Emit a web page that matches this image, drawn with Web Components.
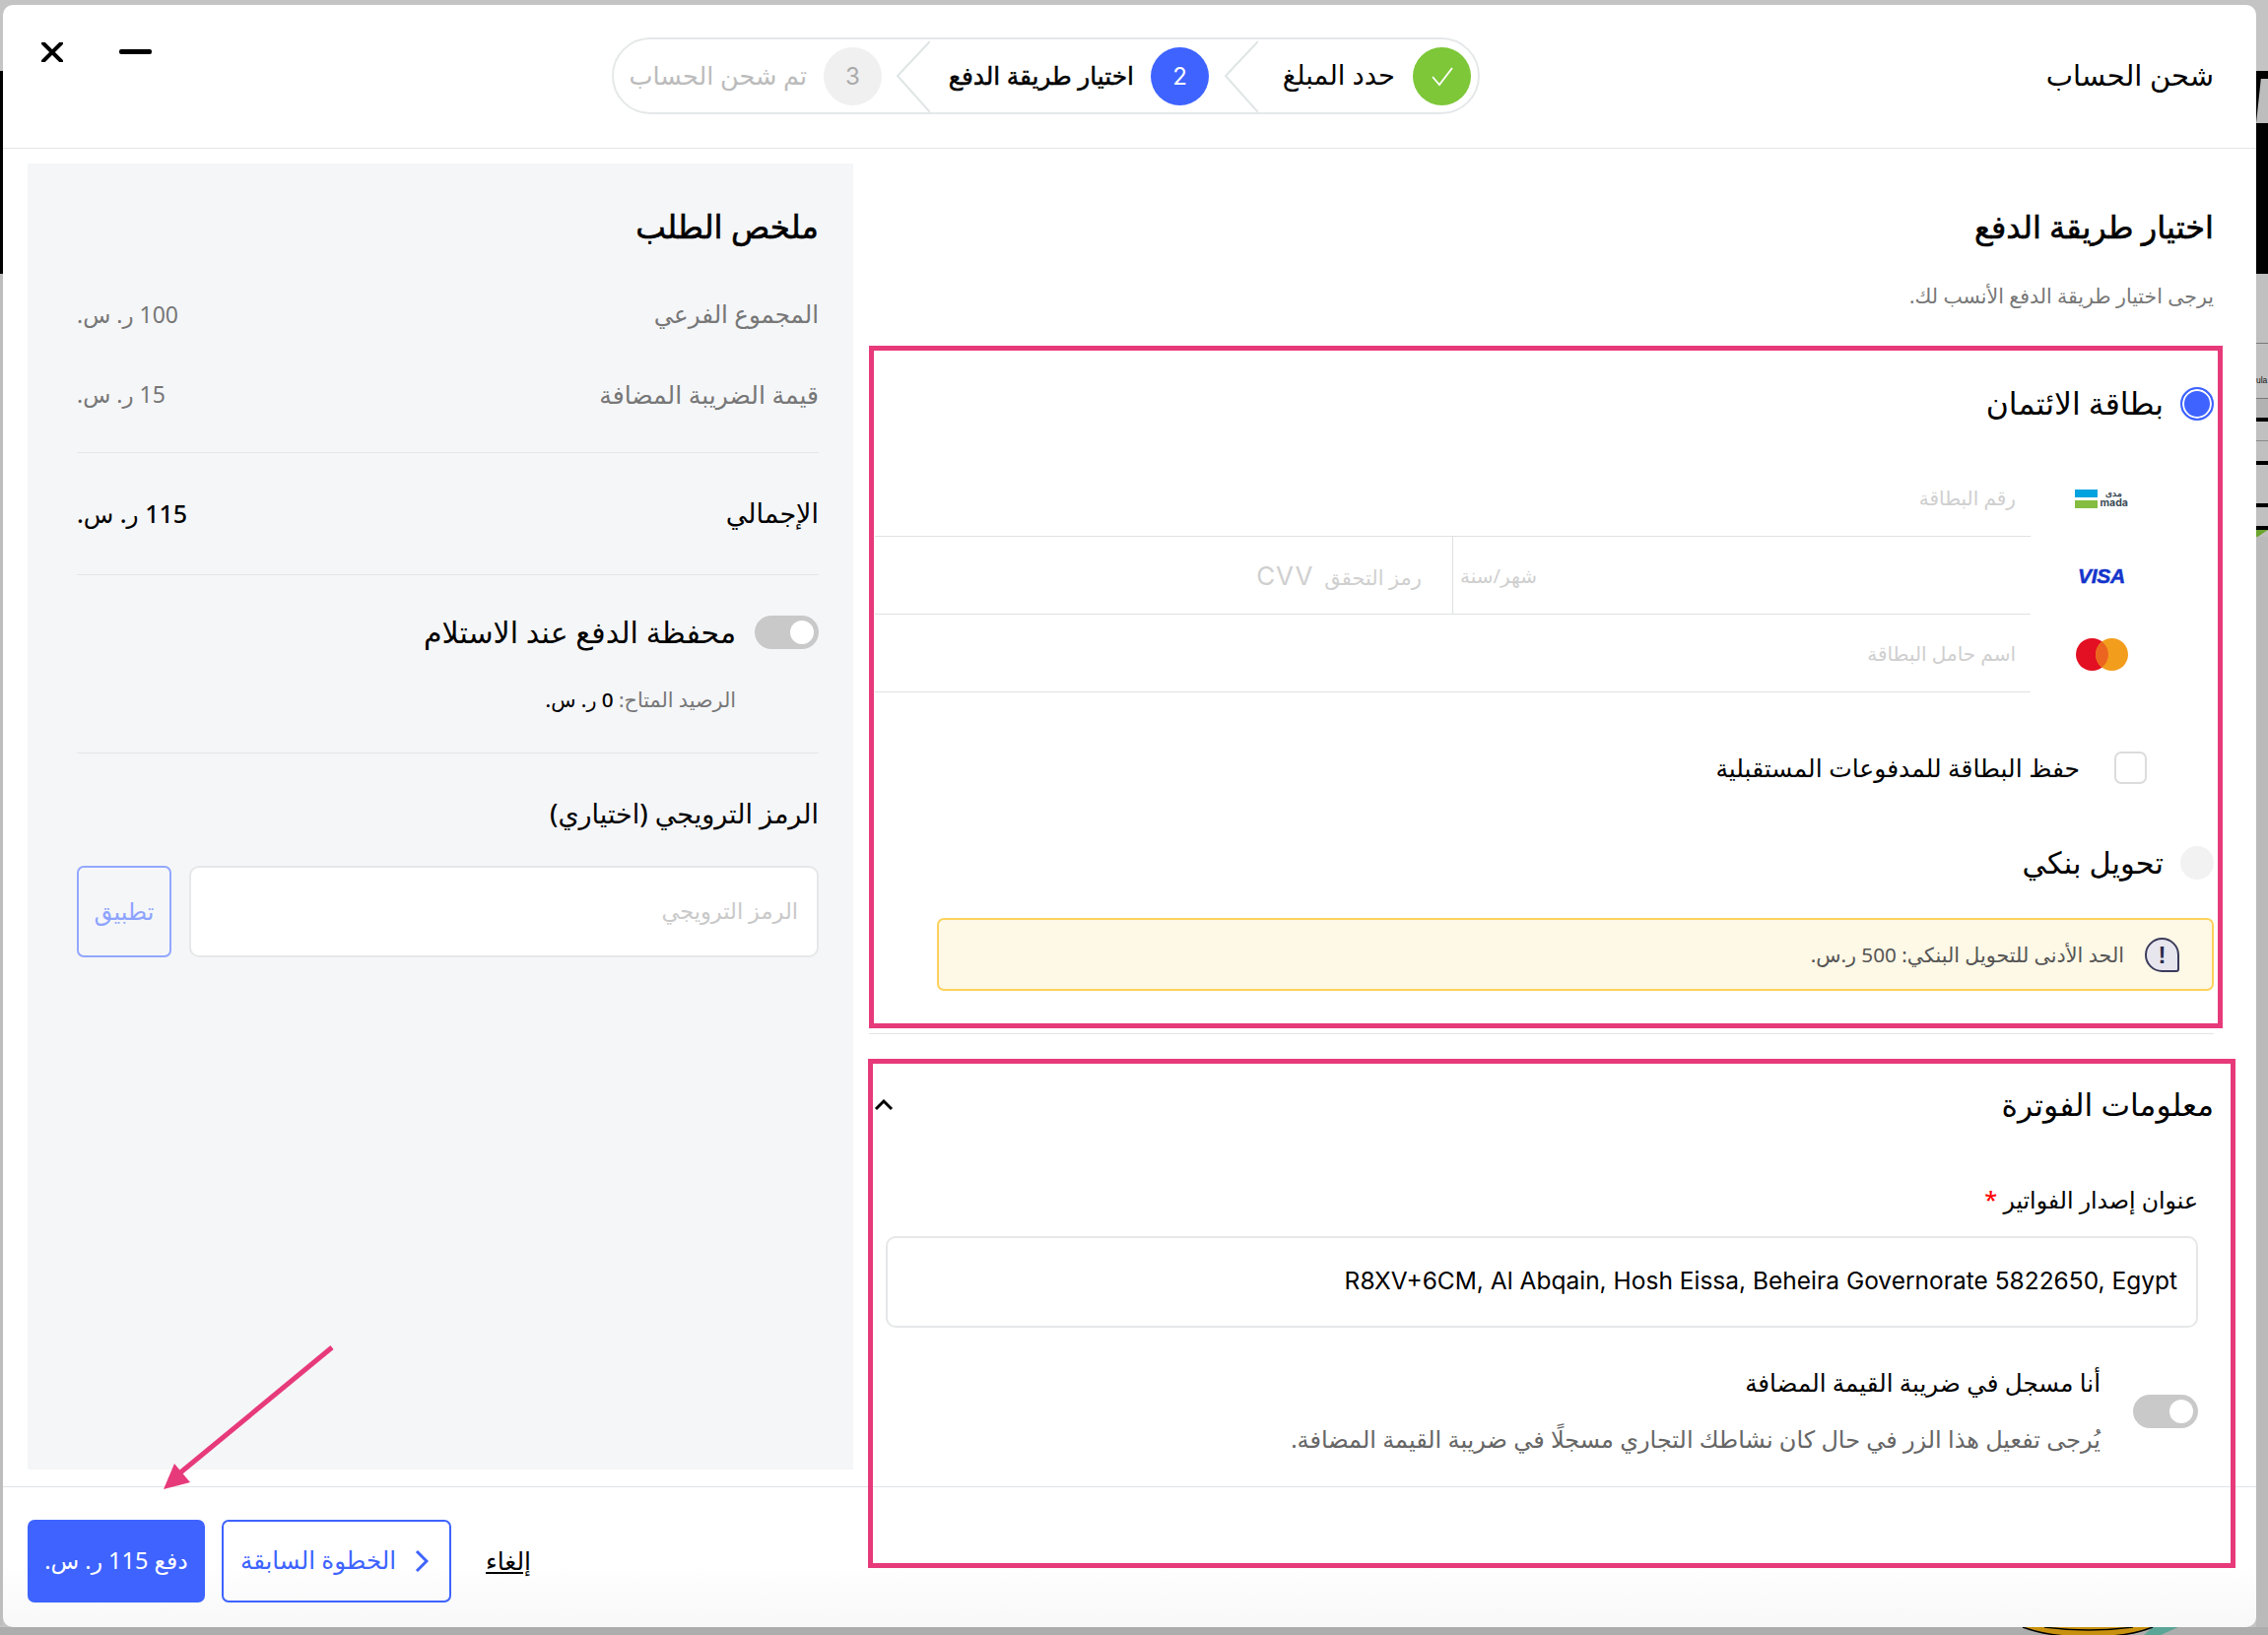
<!DOCTYPE html>
<html lang="ar"><head><meta charset="utf-8"><title>شحن الحساب</title>
<style>
html,body{margin:0;padding:0;background:#c4c4c4}
body{width:2302px;height:1660px;overflow:hidden;font-family:"Noto Sans","DejaVu Sans",sans-serif;color:#000;position:relative}
</style></head><body>
<pay-backdrop></pay-backdrop>
<pay-modal>
  <modal-header slot="header"></modal-header>
  <payment-column slot="main"></payment-column>
  <summary-column slot="side"></summary-column>
  <modal-footer slot="footer"></modal-footer>
</pay-modal>
<pay-annotations></pay-annotations>
<script>
const FONT='"Noto Sans","DejaVu Sans",sans-serif';
function def(name,html,setup){
  customElements.define(name,class extends HTMLElement{
    constructor(){super();const r=this.attachShadow({mode:'open'});
      r.innerHTML=typeof html==='function'?html(this):html;}
    connectedCallback(){if(setup)setup(this)}
  });
}
def('pay-backdrop',`<style>
:host{position:absolute;inset:0;display:block;z-index:0;overflow:hidden}
i{position:absolute;display:block}
span{position:absolute;left:2290px;top:380px;font:8.5px/12px "Liberation Sans",sans-serif;color:#111;white-space:nowrap}
svg{position:absolute;left:2040px;top:1652px}
</style>
<i style="left:0;top:72px;width:3px;height:206px;background:#000"></i>
<i style="left:0;top:278px;width:3px;height:1372px;background:#bdbdbd"></i>
<i style="left:2290px;top:72px;width:12px;height:206px;background:#000"></i>
<i style="left:2290px;top:80px;width:12px;height:45px;background:#bdbdbd;clip-path:polygon(40% 0,100% 0,100% 100%,0 100%)"></i>
<i style="left:2290px;top:278px;width:12px;height:1374px;background:#c0c0c0"></i>
<i style="left:2290px;top:348px;width:12px;height:1px;background:#777"></i>
<i style="left:2290px;top:404px;width:12px;height:20px;background:#b2b2b2;border-top:1px solid #777"></i>
<i style="left:2290px;top:424px;width:12px;height:4px;background:#000"></i>
<i style="left:2290px;top:447px;width:12px;height:1px;background:#888"></i>
<i style="left:2290px;top:468px;width:12px;height:4px;background:#000"></i>
<i style="left:2290px;top:511px;width:12px;height:4px;background:#000"></i>
<i style="left:2290px;top:534px;width:12px;height:4px;background:#000"></i>
<i style="left:2290px;top:538px;width:12px;height:8px;background:#6aa52e;clip-path:polygon(0 0,100% 0,0 100%)"></i>
<i style="left:2290px;top:545px;width:12px;height:1107px;background:#bababa"></i>
<i style="left:0;top:1652px;width:2302px;height:8px;background:#adadad"></i>
<span>ula</span>
<svg width="180" height="8" viewBox="0 0 180 8"><path d="M145 0h26l-18 8h-17z" fill="#5ba596"/><path d="M13 0 Q40 10 80 10 Q120 10 145 0Z" fill="#c8900f"/><path d="M13 0 Q40 10 80 10 Q120 10 145 0" fill="none" stroke="#000" stroke-width="1.5"/><path d="M35 0 Q80 6 125 0" fill="none" stroke="#000" stroke-width="1.5"/></svg>
`);
def('pay-modal',`<style>
:host{display:flex;flex-direction:column;position:absolute;left:3px;top:5px;width:2287px;height:1647px;background:linear-gradient(#fff 96%,#f8f8f8);border-radius:10px;overflow:hidden;z-index:1;font-family:${FONT}}
.main{display:flex;direction:rtl;height:1358px}
</style>
<slot name="header"></slot>
<div class="main"><slot name="main"></slot><slot name="side"></slot></div>
<slot name="footer"></slot>`);
def('modal-header',`<style>
:host{display:flex;align-items:flex-start;height:145px;border-bottom:1px solid #e3e5e6;padding-left:39px;box-sizing:content-box}
.x{margin-top:38px;width:22px;height:20px;display:block}
.m{margin:45px 0 0 57px;width:33px;height:5px;background:#000;border-radius:2px}
step-bar{margin:33px 0 0 467px}
h1{margin:51px 43px 0 auto;font-size:29px;line-height:40px;font-weight:400;direction:rtl}
</style>
<svg class="x" viewBox="0 0 22 20"><path d="M2 1 20 19M20 1 2 19" stroke="#000" stroke-width="4" stroke-linecap="round" fill="none"/></svg>
<div class="m"></div>
<step-bar></step-bar>
<h1>شحن الحساب</h1>`);
def('step-bar',`<style>
:host{display:flex;direction:rtl;width:881px;height:78px;box-sizing:border-box;border:2px solid #e5e8e9;border-radius:39px;align-items:center}
</style>
<step-item state="done" style="width:223px" label="حدد المبلغ"></step-item>
<step-item state="active" num="2" style="width:333px" label="اختيار طريقة الدفع"></step-item>
<step-item state="next" num="3" style="width:321px" label="تم شحن الحساب" last></step-item>`);
def('step-item',h=>{
  const s=h.getAttribute('state'),last=h.hasAttribute('last');
  const bg={done:'#7dc738',active:'#3e63ff',next:'#f0f0f0'}[s];
  const col={done:'#000',active:'#000',next:'#bbb'}[s];
  const fg=s==='next'?'#aaa':'#fff';
  const inner=s==='done'?'<svg width="26" height="26" viewBox="0 0 26 26"><path d="M3 14l7 8L23 5" fill="none" stroke="#fff" stroke-width="1.8"/></svg>':h.getAttribute('num');
  return `<style>
:host{display:flex;align-items:center;height:74px;position:relative;box-sizing:border-box;padding-right:${s==='done'?7:s==='active'?50:49}px;flex:none}
.c{width:59px;height:59px;border-radius:50%;background:${bg};color:${fg};display:flex;align-items:center;justify-content:center;font:400 24px Inter,sans-serif;flex:none}
.t{margin:-3px ${s==='done'?18:17}px 0 0;font-size:${s==='done'?27.4:s==='active'?24.8:25.5}px;font-weight:${s==='active'?500:400};color:${col};white-space:nowrap;${s==='active'?'-webkit-text-stroke:.5px #000':''}}
svg.chev{position:absolute;left:-34px;top:0;width:34px;height:74px;display:${last?'none':'block'}}
</style>
<div class="c">${inner}</div><div class="t">${h.getAttribute('label')}</div>
<svg class="chev" viewBox="0 0 34 74"><path d="M34 2 1 37 34 74" fill="none" stroke="#e0e5e6" stroke-width="2"/></svg>`});
def('toggle-switch',`<style>
:host{display:block;width:var(--w,66px);height:34px;background:#c9c9c9;border-radius:17px;position:relative;flex:none}
i{position:absolute;right:5px;top:5px;width:24px;height:24px;border-radius:50%;background:#fff}
</style><i></i>`);
def('pay-radio',h=>{const on=h.hasAttribute('on');return `<style>
:host{display:flex;align-items:center;direction:rtl;height:34px}
.r{width:34px;height:34px;border-radius:50%;box-sizing:border-box;flex:none;${on?'border:2px solid #3e63ff;background:#3e63ff;box-shadow:inset 0 0 0 2px #fff':'background:#f2f2f2'}}
.l{margin:-2px 17px 0 0;font-size:${on?31.5:30.5}px;line-height:34px;font-weight:${on?400:500};white-space:nowrap}
</style><div class="r"></div><div class="l">${h.getAttribute('label')}</div>`});
def('card-form',`<style>
:host{display:flex;direction:rtl;margin-top:39px}
.logos{width:144px;margin-right:42px;flex:none;display:flex;flex-direction:column}
.logo{height:79px;display:flex;align-items:center;justify-content:center}
.mada{display:flex;direction:ltr;width:55px;gap:3px;margin-top:2px}
.bars{width:23px;display:flex;flex-direction:column;gap:3px;flex:none}
.bars b{display:block;height:8px}
.names{display:flex;flex-direction:column;height:19px;justify-content:space-between;color:#3c4a55;font-weight:700}
.ar{font:700 8.5px/8px "Noto Sans",sans-serif;text-align:center;height:8px}
.lat{font:700 10.5px/10px Inter,sans-serif;height:10px}
.visa{font:italic 900 21px/20px "Liberation Sans",sans-serif;color:#1434cb;letter-spacing:-.3px;-webkit-text-stroke:.5px #1434cb}
.mc{margin-top:2px;display:block}
.f{flex:1;margin-left:6px}
.row{height:78px;border-bottom:1px solid #dfe1e2;display:flex;align-items:center;font-size:20px;color:#cfcfcf;padding-right:15px}
.mm{width:85px;white-space:nowrap}
.v{padding-right:31px;white-space:nowrap;font-size:21px}
.v em{font:normal 26px Inter,sans-serif;letter-spacing:1px}
</style>
<div class="logos">
 <div class="logo"><div class="mada"><div class="bars"><b style="background:#00a3df"></b><b style="background:#84bd3f"></b></div><div class="names"><span class="ar">مدى</span><span class="lat">mada</span></div></div></div>
 <div class="logo"><span class="visa">VISA</span></div>
 <div class="logo"><svg class="mc" width="53" height="33" viewBox="0 0 53 33"><circle cx="16.5" cy="16.5" r="16.5" fill="#e30f22"/><circle cx="36.5" cy="16.5" r="16.5" fill="#f29d1c"/><path d="M26.5 3.4a16.5 16.5 0 0 1 0 26.2a16.5 16.5 0 0 1 0-26.2Z" fill="#ec6520"/></svg></div>
</div>
<div class="f">
 <div class="row">رقم البطاقة</div>
 <div class="row" style="padding-right:501px"><span class="mm">شهر/سنة</span><span style="width:1px;height:78px;background:#dfe1e2;flex:none"></span><span class="v">رمز التحقق&nbsp; <em>CVV</em></span></div>
 <div class="row">اسم حامل البطاقة</div>
</div>`);
def('pay-check',`<style>
:host{display:flex;direction:rtl;align-items:center;margin-top:60px;height:33px;padding-right:68px}
.b{width:33px;height:33px;box-sizing:border-box;border:2px solid #dcdcdc;border-radius:7px;flex:none}
.t{margin-right:35px;font-size:25px;line-height:33px;font-weight:500;white-space:nowrap}
</style><div class="b"></div><div class="t"><slot></slot></div>`);
def('alert-note',`<style>
:host{display:flex;direction:rtl;align-items:center;height:74px;box-sizing:border-box;margin:39px 0 0 69px;border:2px solid #fdd25c;border-radius:7px;background:#fef8e6;padding-right:33px}
.i{width:35px;height:35px;box-sizing:border-box;border:2px solid #3b3b5c;border-radius:50% 50% 3px 50%;background:#e7e6ef;color:#2c2c4c;font:700 24px/31px "Liberation Sans",sans-serif;text-align:center;flex:none}
.t{margin-right:21px;font-size:20.7px;color:#555;white-space:nowrap}
</style><div class="i">!</div><div class="t"><slot></slot></div>`);
def('text-input',h=>`<style>
:host{display:flex;align-items:center;height:93px;box-sizing:border-box;background:#fff;border:2px solid #e5e7e8;border-radius:10px;direction:rtl;padding:0 19px 3px 0;font-size:var(--fs,22.5px);color:var(--c,#c9c9c9);white-space:nowrap}
</style><slot></slot>`);
def('billing-info',`<style>
:host{display:block;direction:rtl}
.h{display:flex;justify-content:space-between;align-items:center;height:40px;margin-top:51px}
h2{margin:0;font-size:31.4px;font-weight:500;line-height:40px}
svg{display:block}
.lab{margin:62px 16px 0 0;height:30px;font-size:23.6px;line-height:30px;font-weight:500}
.lab span{color:#f00}
text-input{margin:22px 16px 0 17px;--c:#000;--fs:24.5px}
.vat{display:flex;align-items:center;margin:41px 16px 0 0}
.txt{margin-right:33px}
.a{font-size:24.6px;line-height:30px;height:30px;font-weight:500;white-space:nowrap}
.b{margin-top:27px;font-size:24px;line-height:30px;height:30px;color:#666;white-space:nowrap}
</style>
<div class="h"><h2>معلومات الفوترة</h2><svg width="22" height="14" viewBox="0 0 22 14" style="margin:2px 4px 0 0;margin-left:4px"><path d="M3 11 11 3l8 8" fill="none" stroke="#000" stroke-width="3"/></svg></div>
<div class="lab">عنوان إصدار الفواتير <span>*</span></div>
<text-input><span dir="ltr" style="font-family:Inter,'Noto Sans',sans-serif">R8XV+6CM, Al Abqain, Hosh Eissa, Beheira Governorate 5822650, Egypt</span></text-input>
<div class="vat"><toggle-switch></toggle-switch><div class="txt"><div class="a">أنا مسجل في ضريبة القيمة المضافة</div><div class="b">يُرجى تفعيل هذا الزر في حال كان نشاطك التجاري مسجلًا في ضريبة القيمة المضافة.</div></div></div>`);
def('payment-column',`<style>
:host{display:block;box-sizing:border-box;width:1408px;padding:0 43px 0 0;flex:none;direction:rtl}
h2{margin:59px 0 0;font-size:32px;line-height:40px;font-weight:500;-webkit-text-stroke:.6px #000}
p{margin:35px 0 0;font-size:20.5px;line-height:30px;color:#777}
pay-radio.a{margin-top:78px}
pay-radio.b{margin-top:63px}
hr{border:0;height:1px;background:#e3e5e6;margin:43px 0 0}
</style>
<h2>اختيار طريقة الدفع</h2>
<p>يرجى اختيار طريقة الدفع الأنسب لك.</p>
<pay-radio class="a" on label="بطاقة الائتمان"></pay-radio>
<card-form></card-form>
<pay-check>حفظ البطاقة للمدفوعات المستقبلية</pay-check>
<pay-radio class="b" label="تحويل بنكي"></pay-radio>
<alert-note>الحد الأدنى للتحويل البنكي: 500 ر.س.</alert-note>
<hr>
<billing-info></billing-info>`);
def('summary-row',h=>`<style>
:host{display:flex;justify-content:space-between;align-items:center;direction:rtl;white-space:nowrap}
.v{font-size:var(--vf,inherit)}
</style><span>${h.getAttribute('label')}</span><span class="v">${h.getAttribute('value')}</span>`);
def('summary-column',`<style>
:host{display:block;flex:none;box-sizing:border-box;width:879px;padding:15px 16px 17px 25px;direction:rtl}
.p{background:#f5f6f8;height:100%;box-sizing:border-box;padding:44px 35px 0 50px}
h2{margin:0;font-size:32.5px;line-height:40px;font-weight:500;-webkit-text-stroke:.6px #000}
summary-row.s{font-size:24.5px;line-height:30px;height:30px;color:#777;--vf:23px}
summary-row.t{font-size:27px;line-height:36px;height:36px;font-weight:500;margin-top:43px;--vf:25px}
hr{border:0;height:1px;background:#e3e6e8;margin:0}
.w{display:flex;align-items:center;margin-top:41px;height:34px}
.w span{margin-right:19px;font-size:30px;line-height:34px;font-weight:500;white-space:nowrap}
.bal{margin:38px 84px 0 0;font-size:20.7px;line-height:26px;height:26px;color:#777;white-space:nowrap}
.bal b{color:#000;font-weight:500}
.pl{margin-top:43px;font-size:27px;line-height:36px;height:36px;font-weight:500}
.pr{display:flex;gap:18px;margin-top:35px}
text-input{flex:1}
.ap{width:96px;height:93px;box-sizing:border-box;border:2px solid #93a7ff;border-radius:7px;color:#8ea3ff;font-size:24px;display:flex;align-items:center;justify-content:center;flex:none;padding-bottom:3px}
</style>
<div class="p">
<h2>ملخص الطلب</h2>
<summary-row class="s" style="margin-top:54px" label="المجموع الفرعي" value="100 ر. س."></summary-row>
<summary-row class="s" style="margin-top:51px;font-size:25.1px" label="قيمة الضريبة المضافة" value="15 ر. س."></summary-row>
<hr style="margin-top:44px">
<summary-row class="t" label="الإجمالي" value="115 ر. س."></summary-row>
<hr style="margin-top:44px">
<div class="w"><toggle-switch style="--w:65px"></toggle-switch><span>محفظة الدفع عند الاستلام</span></div>
<div class="bal">الرصيد المتاح: <b>0 ر. س.</b></div>
<hr style="margin-top:41px">
<div class="pl">الرمز الترويجي (اختياري)</div>
<div class="pr"><text-input>الرمز الترويجي</text-input><div class="ap">تطبيق</div></div>
</div>`);
def('modal-footer',`<style>
:host{display:flex;align-items:flex-start;border-top:1px solid #e0e4e6;padding:33px 0 0 25px;flex:1}
a,div{display:flex;align-items:center;justify-content:center;height:84px;box-sizing:border-box;white-space:nowrap;direction:rtl;padding-bottom:3px}
.pay{width:180px;background:#3e63ff;color:#fff;border-radius:7px;font-size:23.5px}
.prev{width:233px;margin-left:17px;border:2px solid #3e63ff;color:#3e63ff;border-radius:7px;gap:19px;font-size:24.5px;padding-right:4px}
.c{margin-left:35px;font-size:25px;font-weight:500;color:#000;text-decoration:underline}
</style>
<div class="pay">دفع 115 ر. س.</div>
<div class="prev"><svg width="14" height="24" viewBox="0 0 14 24" style="margin-top:3px"><path d="M2 2l10 10-10 10" fill="none" stroke="#3e63ff" stroke-width="3"/></svg><span>الخطوة السابقة</span></div>
<a class="c">إلغاء</a>`);
def('pay-annotations',`<style>
:host{position:absolute;inset:0;display:block;z-index:5;pointer-events:none}
i{position:absolute;display:block;box-sizing:border-box;border:5px solid #e73a7b}
svg{position:absolute;left:0;top:0}
</style>
<i style="left:882px;top:351px;width:1374px;height:693px"></i>
<i style="left:881px;top:1075px;width:1388px;height:517px"></i>
<svg width="400" height="1660" viewBox="0 0 400 1660"><path d="M337 1368 182 1496" stroke="#e73a7b" stroke-width="5" fill="none"/><path d="M166 1512 177 1486 193 1505Z" fill="#e73a7b"/></svg>`);
</script>
</body></html>
